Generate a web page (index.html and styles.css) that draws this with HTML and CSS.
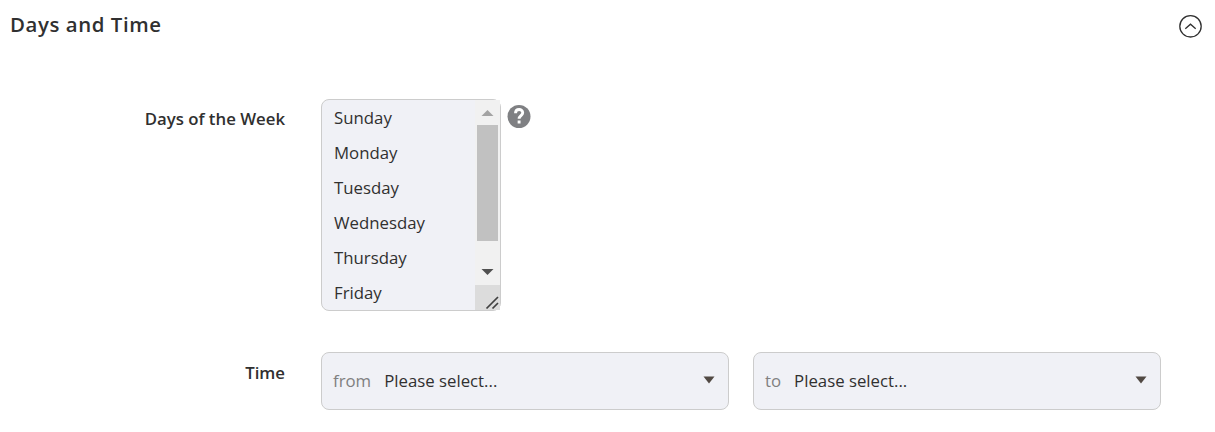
FILE: index.html
```html
<!DOCTYPE html>
<html lang="en">
<head>
<meta charset="utf-8">
<title>Days and Time</title>
<link rel="stylesheet" href="styles.css">
</head>
<body>
<section class="panel">
  <header class="head">
    <h2 class="title">Days and Time</h2>
    <svg class="toggle" viewBox="0 0 24 24"><circle cx="12.500" cy="12.300" r="10.700"/><path d="M7.300 14.700 12.500 10.200l5.200 4.500"/></svg>
  </header>
  <div class="row days">
    <div class="label">Days of the Week</div>
    <div class="listbox">
      <ul class="options">
        <li>Sunday</li><li>Monday</li><li>Tuesday</li><li>Wednesday</li><li>Thursday</li><li>Friday</li>
      </ul>
      <div class="bar">
        <svg class="arrow" viewBox="0 0 25 25"><path fill="#a3a3a3" d="M6.500 16 12.500 10l6 6z"/></svg>
        <div class="track"><div class="thumb"></div></div>
        <svg class="arrow" viewBox="0 0 25 25"><path fill="#505050" d="M6.500 9h12l-6 6z"/></svg>
        <svg class="grip" viewBox="0 0 25 25"><path d="M11.500 23.500 23 12M17.500 23.500l5.500-5.500"/></svg>
      </div>
    </div>
    <svg class="help" viewBox="0 0 24 24"><circle cx="12" cy="12.500" r="11.500"/><path d="M8.500 9.200c.1-4.900 7.200-4.700 7.200-.4 0 2.700-3.600 3-3.600 6M12.100 16.600v3"/></svg>
  </div>
  <div class="row time">
    <div class="label">Time</div>
    <div class="select"><span class="pre">from</span><span class="value">Please select...</span><svg class="caret" viewBox="0 0 12 8"><path d="M.5.500h11L6 7.500z"/></svg></div>
    <div class="select to"><span class="pre">to</span><span class="value">Please select...</span><svg class="caret" viewBox="0 0 12 8"><path d="M.5.500h11L6 7.500z"/></svg></div>
  </div>
</section>
</body>
</html>
```
FILE: styles.css
```css
* { box-sizing: border-box; }
body { margin: 0; background: #fff; color: #303030; font: 16.8px/35px "Open Sans", sans-serif; }
.panel { height: 432px; overflow: hidden; }
.head { display: flex; justify-content: space-between; height: 99px; padding: 0 13px 0 10px; }
.title { margin: 6px 0 0; font-size: 20.4px; font-weight: 560; line-height: 36px; letter-spacing: .57px; }
.toggle { width: 24px; height: 24px; margin-top: 14px; fill: none; stroke: #303030; stroke-width: 1.3; }
.row { display: flex; }
.days { height: 253px; }
.label { width: 285px; margin-right: 36px; text-align: right; font-weight: 590; }
.days .label { padding-top: 2px; }
.time .label { padding-top: 3px; }
.listbox { display: flex; width: 180px; height: 212px; border: 1px solid #ccc; border-radius: 8px; background: #f0f1f6; }
.options { flex: 1; margin: 0; padding: 0 0 0 12px; list-style: none; }
.bar { width: 25px; display: flex; flex-direction: column; background: #f1f1f1; }
.arrow { width: 25px; height: 25px; flex: none; }
.track { flex: 1; padding: 0 2px; }
.thumb { height: 116px; background: #c1c1c1; }
.grip { width: 25px; height: 25px; flex: none; background: #dcdcdc; fill: none; stroke: #404040; stroke-width: 1.7; }
.help { width: 24px; height: 24px; margin: 5px 0 0 6px; fill: #7f8083; }
.help path { fill: none; stroke: #fff; stroke-width: 2.9; }
.select { display: flex; align-items: center; width: 408px; height: 58px; padding: 0 13px 2px 11px; border: 1px solid #ccc; border-radius: 8px; background: #f0f1f6; }
.to { margin-left: 24px; }
.pre { margin-right: 13px; color: #808080; }
.value { flex: 1; }
.caret { width: 12px; height: 8px; margin-top: -1px; fill: #514943; }
```
